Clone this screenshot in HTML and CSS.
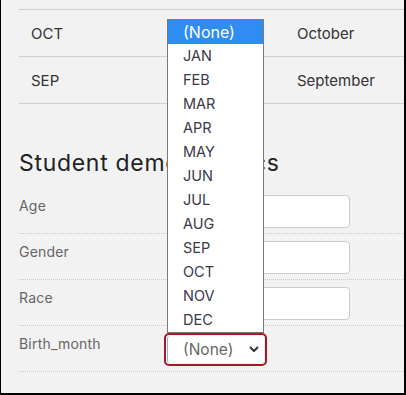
FILE: index.html
```html
<!DOCTYPE html>
<html>
<head>
<meta charset="utf-8">
<link rel="stylesheet" href="styles.css">
</head>
<body>
<div class="frame">
  <table class="months">
    <tr><td class="c1">OCT</td><td class="c2"></td><td class="c3">October</td></tr>
    <tr><td class="c1">SEP</td><td class="c2"></td><td class="c3">September</td></tr>
  </table>

  <h2 class="heading">Student demographics</h2>

  <div class="form">
    <div class="row"><div class="label">Age</div><div class="field"><div class="input"></div></div></div>
    <div class="row"><div class="label">Gender</div><div class="field"><div class="input"></div></div></div>
    <div class="row"><div class="label">Race</div><div class="field"><div class="input"></div></div></div>
    <div class="row"><div class="label">Birth_month</div>
      <div class="field">
        <div class="select-ring">
          <div class="select">
            <span class="select-value">(None)</span>
            <svg class="chev" width="10" height="7" viewBox="0 0 10 7"><path d="M1.5 1.5 L5 5 L8.5 1.5" fill="none" stroke="#333" stroke-width="2" stroke-linecap="round" stroke-linejoin="round"/></svg>
          </div>
        </div>
      </div>
    </div>
  </div>

  <ul class="dropdown">
    <li class="active">(None)</li>
    <li>JAN</li><li>FEB</li><li>MAR</li><li>APR</li><li>MAY</li><li>JUN</li>
    <li>JUL</li><li>AUG</li><li>SEP</li><li>OCT</li><li>NOV</li><li>DEC</li>
  </ul>
</div>
</body>
</html>
```
FILE: styles.css
```css
html, body { margin: 0; padding: 0; }
body { font-family: Inter, "Noto Sans", sans-serif; }
.frame {
  position: relative;
  box-sizing: border-box;
  width: 406px;
  height: 395px;
  background: #f2f2f2;
  border-left: 1px solid #000;
  border-right: 2px solid #000;
  border-bottom: 2px solid #000;
  padding: 9px 0 0 18px;
  overflow: hidden;
}
.months {
  border-collapse: collapse;
  width: 100%;
  border-top: 1px solid #cfcfcf;
}
.months td {
  height: 46px;
  border-bottom: 1px solid #cfcfcf;
  padding: 0;
  font-size: 15px;
  color: #333;
  vertical-align: middle;
}
.months .c1 { width: 266px; padding-left: 12px; box-sizing: border-box; }
.months .c2 { width: 0; }
.months .c3 { padding-left: 12px; }
.heading {
  margin: 43px 0 0 0;
  font-size: 23px;
  font-weight: 400;
  color: #222;
  line-height: 32px;
  height: 32px;
  letter-spacing: 0.7px;
}
.form { margin-top: 9px; }
.row {
  display: flex;
  border-bottom: 1px dotted #c8c8c8;
  padding-top: 7px;
  height: 38px;
}
.label {
  width: 148px;
  font-size: 14px;
  color: #666;
  line-height: 20px;
  padding-top: 1px;
  letter-spacing: 0.2px;
}
.field { flex: none; }
.input {
  width: 181px;
  height: 31px;
  background: #fff;
  border: 1px solid #ccc;
  border-radius: 4px;
}
.select-ring {
  margin-left: -3px;
  width: 97px;
  height: 27px;
  border: 2px solid #a01b26;
  border-radius: 5px;
  padding: 1px;
}
.select {
  display: flex;
  align-items: center;
  height: 27px;
  border-left: 1px solid #8fb2dd;
  background: #fff;
  border-radius: 3px;
  padding-left: 15px;
  box-sizing: border-box;
}
.select-value { font-size: 15.5px; color: #666; flex: 1; }
.chev { margin-right: 5px; }
.dropdown {
  position: absolute;
  left: 166px;
  top: 19px;
  width: 97px;
  margin: 0;
  padding: 0;
  list-style: none;
  background: #fff;
  border: 1px solid #7a7a7a;
  box-sizing: border-box;
  height: 314px;
}
.dropdown li {
  height: 24px;
  line-height: 24px;
  padding-left: 15px;
  font-size: 14.5px;
  color: #3a3a48;
}
.dropdown li.active {
  background: #2f8cf0;
  color: #fff;
  font-size: 16px;
}
```
